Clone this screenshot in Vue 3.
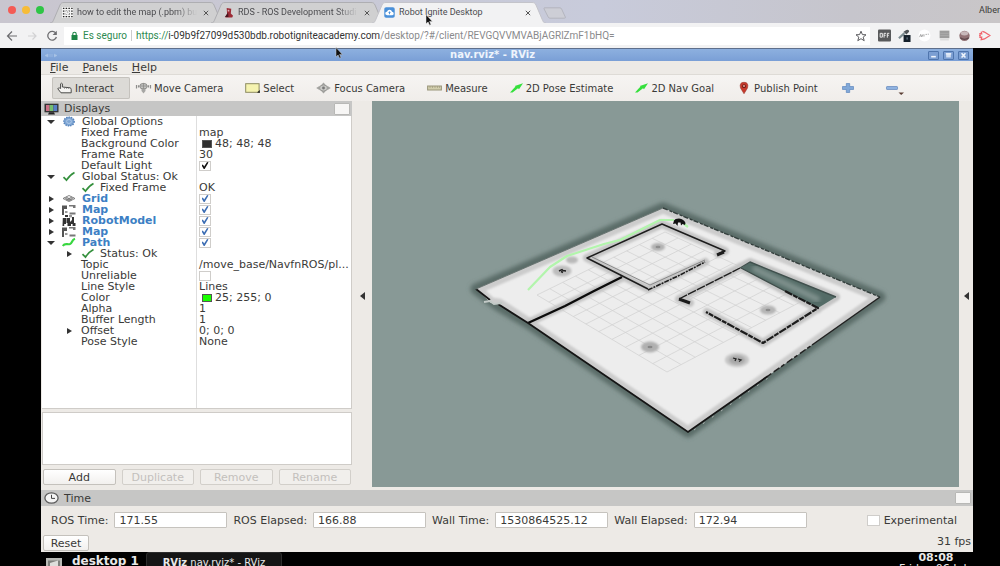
<script setup>
import { ref, computed } from 'vue'

const tabs = [
  { title: 'how to edit the map (.pbm) bu', icon: 'dots', active: false },
  { title: 'RDS - ROS Development Studi', icon: 'rds', active: false },
  { title: 'Robot Ignite Desktop', icon: 'cloud', active: true },
]

const menus = ['File', 'Panels', 'Help']

const tools = [
  { name: 'Interact', icon: 'hand', active: true },
  { name: 'Move Camera', icon: 'move' },
  { name: 'Select', icon: 'select' },
  { name: 'Focus Camera', icon: 'focus' },
  { name: 'Measure', icon: 'measure' },
  { name: '2D Pose Estimate', icon: 'arrow' },
  { name: '2D Nav Goal', icon: 'arrow' },
  { name: 'Publish Point', icon: 'pin' },
]

const rows = ref([
  { name: 'Global Options', level: 'top', arrow: 'down', icon: 'gear' },
  { name: 'Fixed Frame', level: 'prop', value: 'map' },
  { name: 'Background Color', level: 'prop', swatch: 'dark', value: '48; 48; 48' },
  { name: 'Frame Rate', level: 'prop', value: '30' },
  { name: 'Default Light', level: 'prop', check: true, dark: true },
  { name: 'Global Status: Ok', level: 'top', arrow: 'down', icon: 'ok' },
  { name: 'Fixed Frame', level: 'sub', icon: 'ok', value: 'OK' },
  { name: 'Grid', level: 'top', arrow: 'right', icon: 'grid', link: true, check: true },
  { name: 'Map', level: 'top', arrow: 'right', icon: 'map', link: true, check: true },
  { name: 'RobotModel', level: 'top', arrow: 'right', icon: 'robot', link: true, check: true },
  { name: 'Map', level: 'top', arrow: 'right', icon: 'map', link: true, check: true },
  { name: 'Path', level: 'top', arrow: 'down', icon: 'path', link: true, check: true },
  { name: 'Status: Ok', level: 'sub', arrow: 'right', icon: 'ok' },
  { name: 'Topic', level: 'prop', value: '/move_base/NavfnROS/pl...' },
  { name: 'Unreliable', level: 'prop', check: false },
  { name: 'Line Style', level: 'prop', value: 'Lines' },
  { name: 'Color', level: 'prop', swatch: 'green', value: '25; 255; 0' },
  { name: 'Alpha', level: 'prop', value: '1' },
  { name: 'Buffer Length', level: 'prop', value: '1' },
  { name: 'Offset', level: 'prop', arrow: 'right', value: '0; 0; 0' },
  { name: 'Pose Style', level: 'prop', value: 'None' },
])

const actions = [
  { name: 'Add', enabled: true },
  { name: 'Duplicate', enabled: false },
  { name: 'Remove', enabled: false },
  { name: 'Rename', enabled: false },
]

const clocks = ref([
  { id: 'ros-time', label: 'ROS Time:', value: '171.55' },
  { id: 'ros-elapsed', label: 'ROS Elapsed:', value: '166.88' },
  { id: 'wall-time', label: 'Wall Time:', value: '1530864525.12' },
  { id: 'wall-elapsed', label: 'Wall Elapsed:', value: '172.94' },
])

// Ground grid: ten cells a side between four projected corners
const corners = { left: [537, 295], top: [665, 232], right: [808, 298], bottom: [667, 372] }
const gridPath = computed(() => {
  const mix = (a, b, t) => [a[0] + (b[0] - a[0]) * t, a[1] + (b[1] - a[1]) * t]
  const line = (a, b) => `M${a[0].toFixed(1)} ${a[1].toFixed(1)}L${b[0].toFixed(1)} ${b[1].toFixed(1)}`
  const { left, top, right, bottom } = corners
  let d = ''
  for (let i = 0; i <= 10; i++) {
    const t = i / 10
    const near = t * (0.9 + 0.1 * t)
    d += line(mix(left, top, t), mix(bottom, right, t))
    d += line(mix(left, bottom, near), mix(top, right, near))
  }
  return d
})
</script>

<template>
  <div class="screen">
    <header class="browser">
      <div class="tabstrip">
        <div class="lights"><i class="red"></i><i class="yellow"></i><i class="green"></i></div>
        <div class="tabs">
          <div v-for="t in tabs" :key="t.title" class="tab" :class="{ active: t.active }">
            <svg class="tab-shape" viewBox="0 0 174 21" preserveAspectRatio="none" aria-hidden="true">
              <path d="M0 21C3 21 3 19 4 17L10 3C11 1 12 .5 14 .5H160C162 .5 163 1 164 3L170 17C171 19 171 21 174 21" />
            </svg>
            <svg v-if="t.icon === 'dots'" class="fav" viewBox="0 0 12 12" aria-hidden="true">
              <rect width="12" height="12" fill="#f4f4f4" />
              <path d="M1 1.5H12M1 4.5H12M1 7.5H12M1 10.5H12" stroke="#222" stroke-width="1.6" stroke-dasharray="1.6 1.4" />
              <path d="M4 4h4v4H4z" fill="#eee" />
              <path d="M5.3 5.2Q6.8 4.6 6.3 6.2" stroke="#777" stroke-width=".6" fill="none" />
            </svg>
            <svg v-else-if="t.icon === 'rds'" class="fav" viewBox="0 0 12 12" aria-hidden="true">
              <path d="M4 1L9 2L8.5 7L11 9.5L10 11.5H2.5L4.5 7.5Z" fill="#9c2b36" />
              <path d="M2 11L5.5 6L6 11Z" fill="#4c1720" />
              <circle cx="6" cy="4" r="1" fill="#d9b3b6" />
            </svg>
            <svg v-else class="fav" viewBox="0 0 12 12" aria-hidden="true">
              <rect x=".3" y=".3" width="11.4" height="11.4" rx="2" fill="#4a90d9" />
              <path d="M3.5 9Q1 8.8 1.4 6.6Q1.8 5.2 3.2 5.2Q4 3 6 3Q8.2 3 8.8 5.2Q10.6 5.4 10.6 7Q10.6 9 8.6 9Z" fill="#fff" />
              <path d="M6 4.6L7.6 6.4H6.5V7.8H5.5V6.4H4.4Z" fill="#4a90d9" />
            </svg>
            <span class="tab-title">{{ t.title }}</span>
            <button class="tab-close" :aria-label="'Close ' + t.title">
              <svg viewBox="0 0 6 6" aria-hidden="true"><path d="M.8.8L5.2 5.2M5.2.8L.8 5.2" stroke="#555" stroke-width="1" /></svg>
            </button>
          </div>
          <button class="newtab" aria-label="New tab">
            <svg viewBox="0 0 24 12" aria-hidden="true"><path d="M1.5.8H17Q18 .8 18.6 2L22.4 10.2Q22.6 11.2 21.4 11.2H7Q5.8 11.2 5.2 10L1 1.8Q.8.8 1.5.8Z" fill="#cdced6" stroke="#adaeb8" stroke-width=".8" /></svg>
          </button>
        </div>
        <span class="profile">Alber</span>
      </div>

      <div class="navbar">
        <button class="nav" aria-label="Back"><svg viewBox="0 0 12 12"><path d="M11 6H1.5M6 1.5L1.5 6L6 10.5" fill="none" stroke="#6d6d70" stroke-width="1.2" /></svg></button>
        <button class="nav" aria-label="Forward"><svg viewBox="0 0 12 12"><path d="M2 6H10M6.5 2.5L10 6L6.5 9.5" fill="none" stroke="#d2d2d4" stroke-width="1.2" /></svg></button>
        <button class="nav" aria-label="Reload"><svg viewBox="0 0 12 12"><path d="M10 3.6A4.4 4.4 0 1 0 10.4 7" fill="none" stroke="#6d6d70" stroke-width="1.3" /><path d="M10.8.8V5H6.6Z" fill="#6d6d70" /></svg></button>
        <div class="address">
          <svg class="lock" viewBox="0 0 8 10" aria-hidden="true"><rect x="1" y="4" width="6" height="5" fill="#1c8545" /><path d="M2.3 4V3Q2.3 1.3 4 1.3Q5.7 1.3 5.7 3V4" fill="none" stroke="#1c8545" stroke-width="1.1" /></svg>
          <span class="secure">Es seguro</span>
          <span class="url"><span class="secure-text">https</span><span class="secure-text">://</span>i-09b9f27099d530bdb.robotigniteacademy.com<span class="faint">/desktop/?#/client/REVGQVVMVABjAGRlZmF1bHQ=</span></span>
          <button class="star" aria-label="Bookmark"><svg viewBox="0 0 12 12"><path d="M6 1.2L7.4 4.6L11 4.8L8.2 7.1L9.2 10.7L6 8.7L2.8 10.7L3.8 7.1L1 4.8L4.6 4.6Z" fill="none" stroke="#5c5c60" stroke-width="1" /></svg></button>
        </div>
        <div class="extensions">
          <svg viewBox="0 0 12 12"><rect width="12" height="11" y=".5" rx="1" fill="#58595b" /><path d="M2 4H4V7.5H2ZM5.6 8V4H7.4M5.6 5.8H7M8.6 8V4H10.4M8.6 5.8H10" fill="none" stroke="#eee" stroke-width=".9" /></svg>
          <svg viewBox="0 0 14 14"><path d="M1 10L7 4.5" stroke="#7c8c91" stroke-width="2.4" /><path d="M6 3L9 6L12 3Q12 0 9 1Z" fill="#51565a" /><rect x="6" y="6.5" width="7.5" height="7.5" fill="#15202b" /><path d="M9.8 9V11.4" stroke="#9ab" stroke-width=".8" /></svg>
          <svg viewBox="0 0 12 12"><circle cx="6" cy="6" r="5.5" fill="#fff" /><path d="M1.5 7.5L2.5 5L3.5 7.3L4.5 5M5.5 5V7M7 5H8.2M9 4.8H10" fill="none" stroke="#999" stroke-width=".8" /></svg>
          <svg viewBox="0 0 12 12"><rect x="1.5" y="1.5" width="9" height="7" fill="#9c9c9c" /><path d="M2 4H10M2 6H10M2 10H10" fill="none" stroke="#b5b5b5" stroke-width=".5" /></svg>
          <svg viewBox="0 0 12 12"><circle cx="6" cy="6.3" r="4.8" fill="#927275" /><ellipse cx="6" cy="4" rx="3.4" ry="2" fill="#c8b8ba" /><path d="M2 8Q6 11 10 8" stroke="#5f484c" stroke-width="1.2" fill="none" /></svg>
          <svg viewBox="0 0 12 12"><path d="M4 2.2L6 2.8L11 6L6 9.2L3 9.8L3.4 7.6H1.2M1.2 4.4H3.4L3 2.4M1 6H2.6" fill="none" stroke="#f0626b" stroke-width="1.2" /></svg>
        </div>
      </div>
    </header>

    <main class="desktop">
      <section class="window">
        <div class="titlebar">
          <svg class="grip" viewBox="0 0 12 5" aria-hidden="true"><path d="M0 2.5L3 1V4ZM5 1V4M7 1V4M9 1L12 2.5L9 4" fill="#a9c3e6" stroke="#a9c3e6" stroke-width=".6" /></svg>
          <h1>nav.rviz* - RViz</h1>
          <div class="winbuttons">
            <button aria-label="Minimize"><svg viewBox="0 0 11 9"><rect x="2.5" y="5" width="6" height="2" /></svg></button>
            <button aria-label="Maximize"><svg viewBox="0 0 11 9"><rect x="2.5" y="2" width="6" height="5" opacity=".75" /><rect x="2" y="1.5" width="7" height="1.6" /></svg></button>
            <button aria-label="Close"><svg viewBox="0 0 11 9"><path d="M3 1.5L8 7M8 1.5L3 7" stroke="#f0f5fc" stroke-width="2" /></svg></button>
          </div>
        </div>

        <nav class="menubar">
          <button v-for="m in menus" :key="m"><u>{{ m[0] }}</u>{{ m.slice(1) }}</button>
        </nav>

        <div class="toolbar" role="toolbar" aria-label="Tools">
          <button v-for="t in tools" :key="t.name" class="tool" :class="{ pressed: t.active }">
            <svg v-if="t.icon === 'hand'" viewBox="0 0 15 12" aria-hidden="true"><path d="M.8 6.8Q1 5.6 2.6 6L3.6 6.5V1.8Q4.5.6 5.4 1.8V5L13 5.8Q14.3 6.2 14.2 7.4V10.8H4Z" fill="#f5f4f2" stroke="#4b4b49" stroke-width="1" /><path d="M7.5 5.5V7M9.5 5.6V7M11.5 5.8V7" stroke="#777" stroke-width=".6" /></svg>
            <svg v-else-if="t.icon === 'move'" viewBox="0 0 15 12" aria-hidden="true"><path d="M.5 3V6.5M2.5 3.200V5.500M14.5 3V6.5M12.5 3.200V5.500" stroke="#8d8d8b" stroke-width="1.2" fill="none" /><ellipse cx="7.5" cy="4.2" rx="3.8" ry="2.8" fill="#c2c2c0" stroke="#90908d" /><path d="M7.5 1V7M4 4H11" stroke="#8b8b88" stroke-width=".8" /><path d="M5.5 7H9.5V9L7.5 11.5L5.5 9Z" fill="#a6a6a4" /></svg>
            <svg v-else-if="t.icon === 'select'" viewBox="0 0 15 12" aria-hidden="true"><rect x=".7" y="1.7" width="13.4" height="8.6" fill="#f5f3b0" stroke="#8c8a60" stroke-width="1" /><path d="M12 10.5L14.8 8V11Z" fill="#222" /></svg>
            <svg v-else-if="t.icon === 'focus'" viewBox="0 0 15 12" aria-hidden="true"><path d="M7.5.5L9.8 3H5.2ZM7.5 11.5L9.8 9H5.2ZM.2 6L3.8 3.8V8.2ZM14.8 6L11.2 3.8V8.2Z" fill="#a4a4a1" /><ellipse cx="7.5" cy="6" rx="4" ry="3" fill="#c9c9c6" stroke="#9a9a97" /><circle cx="7.5" cy="6" r="1.4" fill="#777" /></svg>
            <svg v-else-if="t.icon === 'measure'" viewBox="0 0 15 12" aria-hidden="true"><rect x=".6" y="4" width="13.8" height="4" fill="#d1cdac" stroke="#9a967b" stroke-width="1" /><path d="M3 4V6M5.5 4V6M8 4V6M10.5 4V6M12.5 4V6" stroke="#9a967b" stroke-width=".6" /></svg>
            <svg v-else-if="t.icon === 'arrow'" class="narrow" viewBox="1 0 13 12" aria-hidden="true"><path d="M1 10.500L6.500 4.600L5.800 4L14 1.200L10 7.200L9 6.200L3.500 10.500Z" fill="#35e03c" /></svg>
            <svg v-else viewBox="0 0 15 12" aria-hidden="true"><path d="M8 11.8L4.5 6Q3 .3 8 .3Q13 .3 11.5 6Z" fill="#c7392b" stroke="#8d2a20" stroke-width=".5" /><circle cx="8" cy="4.2" r="1.9" fill="#6d1d17" /><circle cx="8" cy="4" r="1" fill="#e9a49a" /></svg>
            {{ t.name }}
          </button>
          <button class="tool" aria-label="Add tool"><svg viewBox="0 0 15 12"><path d="M6.3 1.500H9.7V4.5H13.500V7.5H9.7V10.500H6.3V7.5H2.5V4.5H6.3Z" fill="#81a8d8" stroke="#4f7cb8" stroke-width=".6" /></svg></button>
          <button class="tool" aria-label="Remove tool"><svg class="wide" viewBox="0 0 30 12"><rect x="9.5" y="4.5" width="11" height="3" rx=".6" fill="#8fb2e0" stroke="#5078b4" stroke-width=".6" /><path d="M21.5 10.5H27L24.2 13Z" fill="#5a3d33" /></svg></button>
        </div>

        <div class="work">
          <section class="displays">
            <div class="dock-title">
              <svg viewBox="0 0 15 12" aria-hidden="true"><rect x=".5" y=".7" width="14" height="8.6" fill="#333" /><rect x="2" y="2" width="3.6" height="6" fill="#cb6f86" /><rect x="5.6" y="2" width="3.8" height="6" fill="#74bd70" /><rect x="9.4" y="2" width="3.8" height="6" fill="#577fc6" /><path d="M5 9.3H10L11 11.6H4Z" fill="#222" /></svg>
              <h2>Displays</h2>
              <button aria-label="Close displays panel"></button>
            </div>
            <div class="tree" role="treegrid" aria-label="Displays">
              <div v-for="(r, i) in rows" :key="i" class="row" role="row">
                <div class="name" :class="[r.level, { link: r.link }]" role="gridcell">
                  <span class="arrow" :class="r.arrow"></span>
                  <svg v-if="r.icon === 'gear'" viewBox="0 0 14 11" aria-hidden="true"><ellipse cx="7" cy="5.5" rx="5.2" ry="4.4" fill="#7ea6d4" stroke="#5682ba" stroke-dasharray="1.4 1" stroke-width="1.4" /><ellipse cx="7" cy="5.5" rx="2.4" ry="2" fill="none" stroke="#aec8e8" /></svg>
                  <svg v-else-if="r.icon === 'ok'" viewBox="0 0 14 11" aria-hidden="true"><path d="M1.5 6.2L4.5 9.2Q7.5 4 12.5 1.4" fill="none" stroke="#34903d" stroke-width="1.7" /></svg>
                  <svg v-else-if="r.icon === 'grid'" viewBox="0 0 14 11" aria-hidden="true"><path d="M1 5.5L7 2.5L13 5.5L7 8.5ZM4 4L10 7M10 4L4 7M2.5 4.8L8.5 7.7M11.5 4.8L5.5 7.7" fill="none" stroke="#666" stroke-width=".8" /></svg>
                  <svg v-else-if="r.icon === 'map'" viewBox="0 0 14 11" aria-hidden="true"><path d="M0 1.5H5V5H2V11H0Z" fill="#555" /><path d="M7 1H13.5V4H11V2.5H7ZM7.5 8.5H13.5V10.5H7.5Z" fill="#777" /><path d="M3 7H5.5V9H3Z" fill="#999" /></svg>
                  <svg v-else-if="r.icon === 'robot'" viewBox="0 0 14 11" aria-hidden="true"><path d="M3 0H6V2H3ZM.8 3H4V9H2.2V11H.5ZM4.5 3H8V7L10 5V2H12V8H13.5V11H10.6V9H9V11H5.5V8H4.5Z" fill="#333" /><path d="M7 0H10V2.4H7Z" fill="#999" /></svg>
                  <svg v-else-if="r.icon === 'path'" viewBox="0 0 14 11" aria-hidden="true"><path d="M.8 9C3 5.4 5.2 8 8 7C10.5 6 9.5 3 13 1.8" fill="none" stroke="#38d740" stroke-width="2.2" /></svg>
                  <span>{{ r.name }}</span>
                </div>
                <div class="value" role="gridcell">
                  <input v-if="r.check !== undefined" v-model="r.check" type="checkbox" class="box" :class="{ dark: r.dark }" :aria-label="r.name" />
                  <i v-if="r.swatch" class="swatch" :class="r.swatch"></i>
                  <span v-if="r.value">{{ r.value }}</span>
                </div>
              </div>
            </div>
            <div class="description"></div>
            <div class="actions">
              <button v-for="a in actions" :key="a.name" :disabled="!a.enabled">{{ a.name }}</button>
            </div>
          </section>

          <button class="handle" aria-label="Collapse left panel"><i></i></button>

          <svg class="view" viewBox="372 101 587 386" preserveAspectRatio="xMidYMid slice" role="img" aria-label="Map of the floor">
            <defs>
              <filter id="soft" x="-10%" y="-10%" width="120%" height="120%"><feGaussianBlur stdDeviation="2" /></filter>
              <filter id="fine" x="-10%" y="-10%" width="120%" height="120%"><feGaussianBlur stdDeviation=".8" /></filter>
              <clipPath id="floor"><path d="M663 208L880 297L688 432L528 323L499 304L491 303L476 289Z" /></clipPath>
            </defs>
            <rect x="372" y="101" width="587" height="386" fill="#889996" />
            <path d="M663 208L880 297L688 432L528 323L499 306L476 289Z" fill="#5a6b68" stroke="#5a6c68" stroke-width="11" stroke-linejoin="round" filter="url(#soft)" />
            <g clip-path="url(#floor)">
              <path d="M663 208L880 297L688 432L528 323L499 304L491 303L476 289Z" fill="#ededed" />
              <path d="M663 208L880 297L688 432L528 323L499 304L491 303L476 289Z" fill="none" stroke="#cccccc" stroke-width="11" filter="url(#fine)" />
              <path :d="gridPath" fill="none" stroke="#d3d3d3" stroke-width=".8" />
              <!-- inflated walls -->
              <g fill="none" stroke="#c5c5c5" stroke-width="8" stroke-linejoin="round" stroke-linecap="round" filter="url(#fine)">
                <path d="M528 323L624 277" />
                <path d="M718 254L725 251L662 224L587 258L648 289L705 262" />
                <path d="M690 303L679 299L750 262L836 297L763 343L707 312M740 267L818 309" />
              </g>
            </g>
            <path d="M741 268L750 262L836 297L818 308Z" fill="#536b66" />
            <path d="M755 269L817 299" stroke="#81938f" stroke-width="6" stroke-linecap="round" filter="url(#soft)" />
            <!-- walls -->
            <g fill="none" stroke="#1c1c1c" stroke-linejoin="round">
              <path d="M528 323L565 306L594 291L622 277" stroke="#0b0b0b" stroke-width="2.4" />
              <path d="M718 254L725 251L662 224L587 258L648 289" stroke-width="1.5" />
              <path d="M592 257L650 285L705 260" stroke="#777" stroke-width=".8" />
              <path d="M648 290L678 276L705 262" stroke-width="1.6" stroke-dasharray="5 1 2 1" />
              <path d="M717 255L724 252" stroke-width="3" />
              <path d="M690 303L679 299" stroke-width="3.4" />
              <path d="M679 299L740 268" stroke-width="1.4" stroke-dasharray="9 1" />
              <path d="M740 268L750 262L836 297" stroke="#40504d" stroke-width="1.4" />
              <path d="M785 291L818 308L763 343L706 312" stroke-width="2.2" stroke-dasharray="8 1 5 1" />
              <path d="M741 268L785 291" stroke="#3f4d4a" stroke-width="1.3" />
            </g>
            <!-- outer edge -->
            <g fill="none">
              <path d="M476 289L490 300M498 304L528 323L688 432L768 376" stroke="#151515" stroke-width="1.8" />
              <path d="M768 376L812 345" stroke="#222" stroke-width="1.5" stroke-dasharray="4 3 7 2" />
              <path d="M812 345L880 297" stroke="#222" stroke-width="1.5" />
              <path d="M663 208L880 297" stroke="#35403e" stroke-width="1.4" stroke-dasharray="5 2 3 1" />
              <path d="M476 289L663 208" stroke="#697572" stroke-width="1" />
              <path d="M484 302L490 301L494 304L502 303" stroke="#c3cac7" stroke-width="2" />
              <path d="M694 430L768 378" stroke="#b4bab8" stroke-width=".9" stroke-dasharray="2 9" />
            </g>
            <!-- obstacles -->
            <g filter="url(#fine)">
              <ellipse cx="658" cy="247" rx="7" ry="4" fill="#b2b2b2" />
              <ellipse cx="572" cy="260" rx="6" ry="3.4" fill="#b9b9b9" />
              <ellipse cx="562" cy="271" rx="9.5" ry="5.6" fill="#bdbdbd" />
              <ellipse cx="768" cy="310" rx="8" ry="4.6" fill="#b5b5b5" />
              <ellipse cx="650" cy="347" rx="9" ry="5.4" fill="#b0b0b0" />
              <ellipse cx="737" cy="360" rx="12" ry="7" fill="#c6c6c6" />
              <ellipse cx="737" cy="360" rx="8" ry="4.6" fill="#a8a8a8" />
            </g>
            <ellipse cx="658" cy="247" rx="2.5" ry="1.2" fill="#8f8f8f" />
            <ellipse cx="768" cy="310" rx="2.5" ry="1.2" fill="#8b8b8b" />
            <ellipse cx="650" cy="347" rx="2.5" ry="1.2" fill="#888" />
            <path d="M559 271L562 269.5L563 270.5L566 271M561 271.5L563 272.5" stroke="#222" stroke-width="1.4" fill="none" />
            <path d="M733 358L736 359L735 361M738 359L741 360L739 361.5" stroke="#222" stroke-width="1.3" fill="none" />
            <!-- planned path -->
            <path d="M528 290L550 267L567 256L604 244L620 240L660 220H674M684 224L688 227" fill="none" stroke="#b2f5ac" stroke-width="2.2" stroke-linejoin="round" />
            <path d="M673 224L674 220.500Q675 218.500 679 218.500Q684 219 685.500 223L685 225L682.500 224L681 225.500L680.500 222.500H678L677.500 226L675.500 223.500Z" fill="#111" />
          </svg>

          <button class="handle right" aria-label="Collapse right panel"><i></i></button>
        </div>

        <section class="time">
          <div class="dock-title">
            <svg viewBox="0 0 15 12" aria-hidden="true"><ellipse cx="7.500" cy="6" rx="6.600" ry="5.200" fill="#f4f4f4" stroke="#5b5b5b" stroke-width="1.300" /><path d="M7.500 2.800V6.400H11" fill="none" stroke="#444" stroke-width="1" /></svg>
            <h2>Time</h2>
            <button aria-label="Close time panel"></button>
          </div>
          <div class="time-row">
            <template v-for="c in clocks" :key="c.id">
              <label :for="c.id">{{ c.label }}</label>
              <input :id="c.id" v-model="c.value" type="text" />
            </template>
            <span class="experimental"><input id="experimental" type="checkbox" class="box large" /><label for="experimental">Experimental</label></span>
          </div>
          <div class="status-row">
            <button>Reset</button>
            <span>31 fps</span>
          </div>
        </section>
      </section>

      <footer class="taskbar">
        <svg class="drive" viewBox="0 0 18 9" aria-hidden="true"><path d="M1 1H17V9H1Z" fill="#b9bab6" /><path d="M3 3.500H15V9H3Z" fill="#7d7f7b" /><path d="M5 6L13 3.500V9H5Z" fill="#dededb" /></svg>
        <span class="workspace">desktop 1</span>
        <button class="task"><b>RViz</b> nav.rviz* - RViz</button>
        <div class="clock"><b>08:08</b><span>Friday 06 July</span></div>
      </footer>
    </main>

    <svg class="cursor first" viewBox="0 0 8 12" aria-hidden="true"><path d="M1 .6V9.800L3.100 8L4.600 11.200L6 10.500L4.600 7.400H7.400Z" fill="#111" stroke="#eee" stroke-width=".5" /></svg>
    <svg class="cursor second" viewBox="0 0 8 12" aria-hidden="true"><path d="M1 .6V9.800L3.100 8L4.600 11.200L6 10.500L4.600 7.400H7.400Z" fill="#111" stroke="#ccc" stroke-width=".5" /></svg>
  </div>
</template>

<style>
body { margin: 0; background: #000; }
</style>

<style scoped>
.screen {
  position: relative;
  display: flex;
  flex-direction: column;
  height: 100vh;
  overflow: hidden;
  background: #000;
  color: #3a3a38;
  font: 11px/13px "DejaVu Sans", sans-serif;
}
button, input { font: inherit; color: inherit; }
button { margin: 0; padding: 0; border: 0; background: none; }
h1, h2 { margin: 0; font: inherit; }
svg { display: block; flex: none; }

/* browser */
.browser { font-family: Roboto, "Liberation Sans", sans-serif; }
.tabstrip {
  display: flex;
  align-items: flex-end;
  height: 23px;
  background: linear-gradient(90deg, #c9c6cf, #c8cbdb 60%, #c6c5cc 85%, #c9c6c8);
}
.lights { display: flex; align-self: center; gap: 6px; width: 42px; padding: 0 0 3px 8px; }
.lights i { width: 8px; height: 8px; border-radius: 50%; }
.red { background: #f45b55; }
.yellow { background: #f7bc37; }
.green { background: #2fc546; }
.tabs { display: flex; flex: 1; min-width: 0; align-items: center; }
.tab {
  position: relative;
  display: flex;
  align-items: center;
  width: 174px;
  height: 21px;
  margin-right: -13px;
  padding: 0 15px 0 12px;
  box-sizing: border-box;
  font-size: 9px;
  color: #4c4c50;
}
.tab-shape { position: absolute; inset: 0; width: 100%; height: 100%; fill: #d0d0d1; stroke: #aeaeb2; stroke-width: 1; }
.tab.active { z-index: 1; }
.tab.active .tab-shape { fill: #f2f2f3; stroke: #c4c4ca; }
.fav { position: relative; width: 11px; height: 11px; margin-right: 4px; }
.tab-title { position: relative; flex: 1; white-space: nowrap; }
.tab:not(.active) .tab-title { -webkit-mask-image: linear-gradient(90deg, #000 82%, transparent); mask-image: linear-gradient(90deg, #000 82%, transparent); }
.tab-close { position: relative; margin-left: 6px; }
.tab-close svg { width: 6px; height: 6px; }
.newtab { margin-left: 10px; }
.newtab svg { width: 24px; height: 12px; }
.profile { padding-bottom: 6px; white-space: nowrap; font-size: 9px; }

.navbar { display: flex; align-items: center; height: 25px; background: #f2f2f3; }
.nav { width: 12px; margin-left: 6px; margin-right: 2px; }
.nav svg { width: 12px; height: 12px; }
.address {
  display: flex;
  flex: 1;
  align-items: center;
  min-width: 0;
  height: 18px;
  margin-left: 4px;
  padding: 0 3px 0 6px;
  background: #fff;
  white-space: nowrap;
  font-size: 10px;
}
.lock { width: 9px; height: 10px; margin-right: 4px; }
.secure { padding-right: 4px; margin-right: 4px; border-right: 1px solid #ccc; color: #2c8a50; line-height: 11px; }
.url { flex: 1; overflow: hidden; color: #333; }
.secure-text { color: #2c8a50; }
.faint { color: #8a8a8c; }
.star svg { width: 12px; height: 12px; }
.extensions { display: flex; gap: 7px; align-items: center; padding: 0 9px 0 8px; }
.extensions svg { width: 13px; height: 13px; }

/* window */
.desktop { display: flex; flex: 1; flex-direction: column; min-height: 0; }
.window {
  display: flex;
  flex: 1;
  flex-direction: column;
  margin: 0 27px 0 41px;
  border-top: 1px solid #5e6f8b;
  background: #edeae6;
}
.titlebar {
  display: flex;
  align-items: center;
  height: 12px;
  padding: 0 4px;
  background: linear-gradient(#8db0df, #7a9fd6);
  color: #eef4fc;
  font-size: 10px;
  line-height: 12px;
}
.grip { width: 12px; height: 5px; }
.titlebar h1 { flex: 1; text-align: center; font-weight: bold; }
.winbuttons { display: flex; gap: 4px; }
.winbuttons button { border: 1px solid #4f75ad; border-radius: 1px; background: #7b9ed2; }
.winbuttons svg { width: 9px; height: 7px; fill: #f0f5fc; }
.menubar { display: flex; gap: 14px; height: 13px; padding: 0 9px; }
.menubar button { line-height: 12px; }
.toolbar {
  display: flex;
  gap: 1px;
  height: 27px;
  padding: 0 11px;
  box-sizing: border-box;
  align-items: center;
  border-top: 1px solid #dedbd6;
  background: linear-gradient(#f6f4f2, #f0edea);
  font-size: 10px;
}
.tool { display: flex; align-items: center; gap: 3px; height: 22px; padding: 0 16px 0 5px; white-space: nowrap; }
.tool svg { width: 15px; height: 12px; overflow: visible; }
.tool .narrow { width: 13px; }
.tool .wide { width: 30px; }
.pressed { border-radius: 2px; background: #dcdad6; box-shadow: inset 0 0 0 1px #c5c2bd; }

.work { display: flex; flex: 1; min-height: 0; }
.displays { display: flex; flex-direction: column; width: 311px; }
.dock-title { display: flex; align-items: center; gap: 5px; height: 15px; padding: 0 2px 0 3px; background: #c6c6c5; }
.dock-title svg { width: 15px; height: 12px; }
.dock-title h2 { flex: 1; }
.dock-title button { width: 16px; height: 12px; border: 1px solid #b8b8b6; border-radius: 1px; background: #f7f6f5; box-sizing: border-box; }
.tree {
  flex: 1;
  margin-left: 1px;
  border-right: 1px solid #cfccc8;
  border-bottom: 1px solid #cfccc8;
  background: linear-gradient(90deg, #fff 154px, #dedede 154px, #dedede 155px, #fff 155px);
}
.row { display: flex; height: 11px; line-height: 11px; }
.name { display: flex; align-items: center; width: 155px; flex: none; box-sizing: border-box; white-space: nowrap; }
.name svg { width: 14px; height: 11px; }
.name.top { padding-left: 5px; }
.name.top svg { margin: 0 6px 0 7px; }
.name.prop { padding-left: 23px; }
.name.prop .arrow { margin-right: 8px; }
.name.sub { padding-left: 23px; }
.name.sub svg { margin: 0 5px 0 8px; }
.link { color: #3d7fc4; font-weight: bold; }
.arrow { display: flex; width: 8px; justify-content: center; flex: none; }
.arrow.down::before { content: ""; border: 4px solid transparent; border-top-color: #333; border-bottom: 0; }
.arrow.right::before { content: ""; border: 3px solid transparent; border-left: 5px solid #333; border-right: 0; }
.value { display: flex; flex: 1; align-items: center; padding-left: 2px; min-width: 0; white-space: nowrap; }
.swatch { width: 8px; height: 6px; margin: 0 3px 0 3px; border: 1px solid #555; }
.swatch.dark { background: #303030; }
.swatch.green { background: #19ff00; }
.box {
  display: grid;
  place-items: center;
  width: 12px;
  height: 10px;
  margin: 0;
  box-sizing: border-box;
  appearance: none;
  border: 1px solid #cfcdca;
  background: #fff;
  color: #3d6eb4;
}
.box.dark { color: #111; }
.box:checked::before {
  content: "";
  width: 7px;
  height: 7px;
  background: currentColor;
  clip-path: polygon(0 48%, 20% 36%, 38% 64%, 80% 0, 100% 8%, 45% 100%, 32% 100%);
}
.description { height: 51px; margin: 3px 0 0 1px; border: 1px solid #cfccc8; background: #fff; }
.actions { display: grid; grid-template-columns: repeat(4, 1fr); gap: 6px; padding: 4px 1px 5px 2px; }
.actions button, .status-row button {
  height: 16px;
  border: 1px solid #c4c1bc;
  border-radius: 2px;
  background: linear-gradient(#fff, #f2f0ee);
  line-height: 13px;
}
.actions button:disabled { border-color: #d2cfca; background: #f1efec; color: #c3c0bc; }

.handle { display: flex; align-items: center; justify-content: center; width: 20px; flex: none; }
.handle i { border: 4px solid transparent; border-right: 5px solid #333; border-left: 0; }
.handle.right { width: 14px; }
.view { flex: 1; width: 0; height: auto; margin-bottom: 3px; min-width: 0; }

.time .dock-title { height: 16px; }
.time-row { display: flex; align-items: center; gap: 6px; padding: 6px 16px 0 10px; white-space: nowrap; }
.time-row input[type="text"] {
  width: 113px;
  height: 16px;
  padding: 0 4px;
  box-sizing: border-box;
  border: 1px solid #c6c3be;
  border-radius: 1px;
  background: #fff;
}
.experimental { display: flex; align-items: center; gap: 4px; margin-left: auto; }
.box.large { width: 13px; height: 11px; }
.status-row { display: flex; align-items: flex-start; justify-content: space-between; padding: 7px 2px 1px 2px; }
.status-row button { width: 46px; }

/* task bar */
.taskbar { display: flex; align-items: flex-start; height: 14px; padding: 0 27px 0 45px; color: #e8e8e8; }
.drive { width: 18px; height: 9px; margin: 5px 9px 0 0; }
.workspace { padding-top: 3px; font-size: 12px; font-weight: bold; white-space: nowrap; }
.task {
  width: 136px;
  height: 20px;
  margin-left: 7px;
  flex: none;
  border: 1px solid #2c2c2c;
  border-radius: 3px;
  background: #151515;
  font-size: 10px;
  line-height: 17px;
  white-space: nowrap;
}
.clock { display: flex; flex-direction: column; align-items: center; margin-left: auto; line-height: 11px; white-space: nowrap; }

/* pointers */
.cursor { position: absolute; z-index: 5; width: 8px; height: 12px; }
.first { left: 425px; top: 14px; }
.second { left: 335px; top: 47px; }
</style>
